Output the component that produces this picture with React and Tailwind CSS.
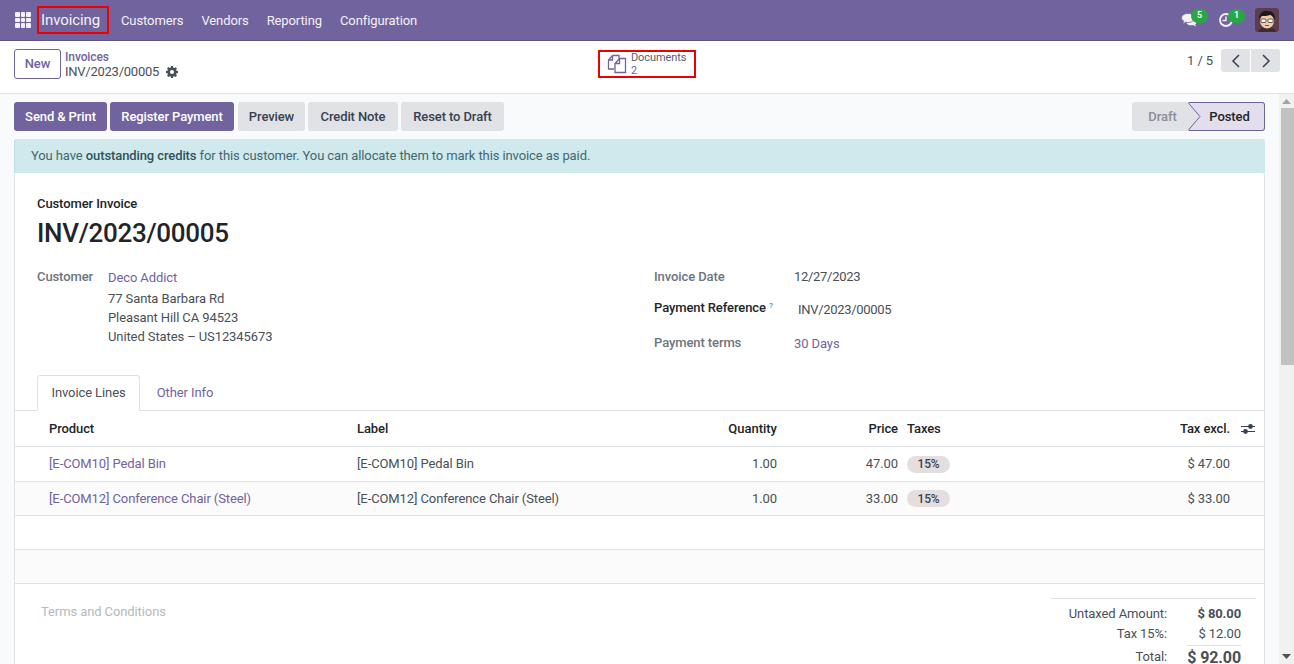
import React from 'react';

const PURPLE = 'text-[#71639e]';

const rows = [
    { product: '[E-COM10] Pedal Bin', qty: '1.00', price: '47.00', amount: '$ 47.00', bg: 'bg-white', h: 'h-[35px]' },
    { product: '[E-COM12] Conference Chair (Steel)', qty: '1.00', price: '33.00', amount: '$ 33.00', bg: 'bg-[#fbfbfb]', h: 'h-[34px]' },
];

const gridCols = 'grid grid-cols-[308px_300px_120px_121px_120px_212px_1fr] pl-[34px]';

const AppsIcon = () => (
    <div className="grid grid-cols-3 gap-[1px] w-[16px] h-[16px]">
        {[...Array(9)].map((_, i) => (
            <span key={i} className="bg-[#f3f1f7] rounded-[1px]" />
        ))}
    </div>
);

const Avatar = () => (
    <svg width="24" height="24" viewBox="0 0 24 24" className="rounded-[3px]">
        <rect width="24" height="24" fill="#5d3c4c" />
        <path d="M3 24c1-4 5-5 9-5s8 1 9 5z" fill="#3d2b2f" />
        <ellipse cx="12" cy="13" rx="7" ry="7.5" fill="#f3c9a8" />
        <path d="M4.5 12C3 5 9 2 13 3c5 0 8 4 6.500 9-1-3-2-4-4-5-3 1-7 1-9 1-1 1-1.500 2-2 4z" fill="#1d1a1c" />
        <rect x="6" y="11" width="5" height="3.500" rx="1" fill="#fff" stroke="#333" strokeWidth="0.800" />
        <rect x="13" y="11" width="5" height="3.500" rx="1" fill="#fff" stroke="#333" strokeWidth="0.800" />
        <path d="M10 17.500h4" stroke="#8a4b3a" strokeWidth="1" />
    </svg>
);

const Navbar = () => (
    <div className="h-[41px] bg-[#71639e] border-b border-[#5f5386] flex items-center pl-[15px] pr-[15px] text-[#f3f1f7] text-[13px]">
        <AppsIcon />
        <div className="ml-[6px] w-[72px] h-[28px] border-2 border-[#ee0000] flex items-center pl-[2px] text-[15px]">Invoicing</div>
        <div className="ml-[12px] pt-[1px] flex gap-[18px]">
            <span>Customers</span>
            <span>Vendors</span>
            <span>Reporting</span>
            <span>Configuration</span>
        </div>
        <div className="ml-auto flex items-center">
            <div className="relative w-[16px] h-[14px] mr-[22px]">
                <svg width="16" height="14" viewBox="0 0 16 14" fill="#f3f1f7">
                    <path d="M10.500 5.500c2.900 0 5.200 1.500 5.200 3.400 0 1-.6 1.800-1.500 2.400l.8 2.200-2.800-1.400c-.5.100-1.100.2-1.700.2-2.900 0-5.200-1.500-5.200-3.400s2.300-3.400 5.200-3.400z" />
                    <path d="M7 .5c3.700 0 6.500 2 6.500 4.500S10.700 9.500 7 9.500c-.8 0-1.500-.1-2.200-.3L1.800 11l.8-3C1.300 7.200.5 6.200.5 5 .5 2.500 3.300.5 7 .5z" stroke="#71639e" strokeWidth="0.800" />
                </svg>
                <span className="absolute -top-[4px] left-[10px] w-[17px] h-[14px] rounded-full bg-[#28a745] text-white text-[9px] font-semibold flex items-center justify-center">5</span>
            </div>
            <div className="relative w-[14px] h-[14px] mr-[22px]">
                <svg width="14" height="14" viewBox="0 0 14 14" fill="none" stroke="#f3f1f7" strokeWidth="1.800">
                    <circle cx="7" cy="7" r="6" />
                    <path d="M7 3.500V7.500H3.500" strokeWidth="1.400" />
                </svg>
                <span className="absolute -top-[4px] left-[9px] w-[17px] h-[14px] rounded-full bg-[#28a745] text-white text-[9px] font-semibold flex items-center justify-center">1</span>
            </div>
            <Avatar />
        </div>
    </div>
);

const ControlPanel = () => (
    <div className="h-[53px] bg-white border-b border-[#dee2e6] flex items-start pl-[14px] pr-[14px] relative">
        <button className="mt-[8px] w-[47px] h-[30px] rounded-[3px] border border-[#71639e] text-[#71639e] text-[13px] font-medium">New</button>
        <div className="ml-[4px] mt-[9px] w-[533px] leading-[14px]">
            <div className={`${PURPLE} text-[12px] font-medium`}>Invoices</div>
            <div className="flex items-center gap-[7px] text-[#495057] text-[13px] leading-[15px] tracking-[-0.25px]">
                INV/2023/00005
                <svg width="12" height="12" viewBox="0 0 16 16" fill="#495057">
                    <path fillRule="evenodd" d="M6.700 0h2.600l.4 2.100 1.300.6 1.800-1.200 1.800 1.800-1.200 1.800.6 1.300 2 .4v2.600l-2 .4-.6 1.300 1.200 1.800-1.800 1.800-1.800-1.200-1.300.6-.4 2H6.700l-.4-2-1.300-.6-1.800 1.200-1.800-1.800 1.200-1.800-.6-1.300-2-.4V6.600l2-.4.6-1.300-1.200-1.800 1.800-1.800 1.800 1.200 1.300-.6zM8 5.300a2.700 2.700 0 100 5.400 2.700 2.700 0 000-5.400z" />
                </svg>
            </div>
        </div>
        <div className="mt-[9px] w-[98px] h-[28px] border-2 border-[#ee0000] flex items-center pl-[7px] gap-[4px]">
            <svg width="20" height="20" viewBox="0 0 20 20" fill="none" stroke="#71639e" strokeWidth="1.300">
                <path d="M5.500 1.500H12V4.500M5.500 1.500V6H1.500M5.500 1.500L1.500 6V15H7" />
                <path d="M12.500 4.500H18.500V18.500H8V9.500ZM12.500 4.500V9.500H8" />
            </svg>
            <div className="text-[11px] leading-[13px] text-[#71639e]">
                <div className="text-[#5a5a6e]">Documents</div>
                <div>2</div>
            </div>
        </div>
        <div className="ml-auto flex items-center mt-[8px]">
            <span className="text-[13px] text-[#495057] mr-[8px]">1 / 5</span>
            <button className="w-[29px] h-[23px] bg-[#e0e2e6] rounded-l-[3px] flex items-center justify-center text-[#374151]">
                <svg width="10" height="14" viewBox="0 0 10 14" fill="none" stroke="currentColor" strokeWidth="1.500"><path d="M8 1L2 7l6 6" /></svg>
            </button>
            <button className="ml-[1px] w-[29px] h-[23px] bg-[#e0e2e6] rounded-r-[3px] flex items-center justify-center text-[#374151]">
                <svg width="10" height="14" viewBox="0 0 10 14" fill="none" stroke="currentColor" strokeWidth="1.500"><path d="M2 1l6 6-6 6" /></svg>
            </button>
        </div>
    </div>
);

const ButtonBar = () => (
    <div className="flex items-start justify-between pt-[8px]">
        <div className="flex gap-[3px]">
            <button className="h-[29px] w-[93px] bg-[#71639e] text-white rounded-[3px] text-[13px] font-medium">Send &amp; Print</button>
            <button className="h-[29px] w-[124px] bg-[#71639e] text-white rounded-[3px] text-[13px] font-medium">Register Payment</button>
            <button className="ml-[1px] h-[29px] w-[67px] bg-[#e0e2e6] text-[#374151] rounded-[3px] text-[13px] font-medium">Preview</button>
            <button className="h-[29px] w-[90px] bg-[#e0e2e6] text-[#374151] rounded-[3px] text-[13px] font-medium">Credit Note</button>
            <button className="h-[29px] w-[103px] bg-[#e0e2e6] text-[#374151] rounded-[3px] text-[13px] font-medium">Reset to Draft</button>
        </div>
        <div className="relative flex h-[29px] w-[133px] text-[13px] font-medium">
            <div className="w-[57px] bg-[#e0e2e6] rounded-l-[3px] text-[#8a8f96] flex items-center justify-center pl-[4px]">Draft</div>
            <div className="flex-1 bg-[#e2deeb] border border-l-0 border-[#71639e] rounded-r-[3px] text-[#212529] flex items-center justify-center pl-[6px]">Posted</div>
            <svg className="absolute left-[56px] top-0" width="14" height="29" viewBox="0 0 14 29">
                <path d="M0 0.500L12 14.500L0 28.500" fill="#e0e2e6" stroke="#71639e" strokeWidth="1" />
            </svg>
        </div>
    </div>
);

const InvoiceTable = () => (
    <div className="text-[13px]">
        <div className={`${gridCols} h-[37px] items-center border-y border-[#dee2e6] font-medium text-[#212529]`}>
            <div>Product</div>
            <div>Label</div>
            <div className="text-right tracking-normal">Quantity</div>
            <div className="text-right">Price</div>
            <div className="pl-[9px]">Taxes</div>
            <div className="text-right">Tax excl.</div>
            <div className="flex justify-center pl-[1px]">
                <svg width="14" height="12" viewBox="0 0 14 12" stroke="#374151" strokeWidth="1.200" fill="#374151">
                    <path d="M0 3.500h14M0 8.500h14" />
                    <circle cx="9.500" cy="3.500" r="1.800" />
                    <circle cx="4.500" cy="8.500" r="1.800" />
                </svg>
            </div>
        </div>
        {rows.map((r) => (
            <div key={r.product} className={`${gridCols} ${r.h} items-center border-b border-[#dee2e6] ${r.bg} text-[#495057]`}>
                <div className={PURPLE}>{r.product}</div>
                <div>{r.product}</div>
                <div className="text-right">{r.qty}</div>
                <div className="text-right">{r.price}</div>
                <div className="pl-[9px]">
                    <span className="inline-flex items-center justify-center w-[43px] h-[17px] rounded-full bg-[#e4dfde] text-[#374151] text-[12px] font-medium">15%</span>
                </div>
                <div className="text-right">{r.amount}</div>
                <div />
            </div>
        ))}
        <div className="h-[34px] border-b border-[#dee2e6] bg-white" />
        <div className="h-[34px] border-b border-[#dee2e6] bg-[#fbfbfb]" />
    </div>
);

const Totals = () => (
    <div className="w-[205px] mr-[8px] border-t border-[#dee2e6] text-[13px] text-[#495057] pt-[5px] pr-[15px]">
        <div className="grid grid-cols-[1fr_74px] h-[20px] items-center text-right">
            <span>Untaxed Amount:</span>
            <span className="font-bold">$ 80.00</span>
        </div>
        <div className="grid grid-cols-[1fr_74px] h-[20px] items-center text-right">
            <span>Tax 15%:</span>
            <span>$ 12.00</span>
        </div>
        <div className="grid grid-cols-[1fr_74px] h-[26px] items-center text-right">
            <span>Total:</span>
            <span className="ml-[20px] text-[16px] font-bold border-t border-[#dee2e6] whitespace-nowrap leading-[24px]">$ 92.00</span>
        </div>
    </div>
);

const App = () => (
    <div className="h-[664px] w-[1294px] overflow-hidden flex flex-col bg-[#f9fafb] font-['Roboto',sans-serif] tracking-[-0.1px]">
        <Navbar />
        <ControlPanel />
        <div className="flex-1 flex min-h-0">
            <div className="flex-1 min-w-0 px-[14px] overflow-hidden">
                <ButtonBar />
                <div className="mt-[8px] h-[34px] rounded-t-[3px] bg-[#cfe9ed] border-l border-[#bcdde2] flex items-center pl-[16px] text-[13px] text-[#3f6870]">
                    <span>You have <b className="font-medium text-[#2f535a]">outstanding credits</b> for this customer. You can allocate them to mark this invoice as paid.</span>
                </div>
                <div className="bg-white border-x border-[#dee2e6] rounded-t-[3px] h-[600px]">
                    <div className="pl-[22px] pt-[23px]">
                        <div className="text-[13px] font-medium text-[#212529] leading-[16px]">Customer Invoice</div>
                        <div className="mt-[5px] text-[26px] font-medium text-[#212529] leading-[32px] tracking-[-0.3px]">INV/2023/00005</div>
                    </div>
                    <div className="flex mt-[18px] pl-[22px] h-[108px]">
                        <div className="w-[617px] flex items-start">
                            <div className="w-[71px] text-[13px] text-[#6c757d] font-medium">Customer</div>
                            <div className="pt-[1px] text-[13px] text-[#495057] leading-[19px]">
                                <div className="text-[#71639e] mb-[2px]">Deco Addict</div>
                                <div>77 Santa Barbara Rd</div>
                                <div>Pleasant Hill CA 94523</div>
                                <div>United States – US12345673</div>
                            </div>
                        </div>
                        <div className="text-[13px] leading-[19px]">
                            <div className="flex h-[31px]">
                                <div className="w-[140px] text-[#6c757d] font-medium">Invoice Date</div>
                                <div className="text-[#495057] tracking-[-0.3px]">12/27/2023</div>
                            </div>
                            <div className="flex h-[35px]">
                                <div className="w-[144px] text-[#212529] font-medium">Payment Reference <sup className="text-[#2a9bc0] text-[8px]">?</sup></div>
                                <div className="text-[#495057] pt-[2px] tracking-[-0.3px]">INV/2023/00005</div>
                            </div>
                            <div className="flex">
                                <div className="w-[140px] text-[#6c757d] font-medium">Payment terms</div>
                                <div className="text-[#71639e] pt-[1px]">30 Days</div>
                            </div>
                        </div>
                    </div>
                    <div className="flex items-end h-[36px] pl-[22px] text-[13px] -mb-[1px] relative z-10">
                        <div className="h-[36px] w-[103px] bg-white border border-b-white border-[#dee2e6] rounded-t-[3px] flex items-center justify-center text-[#495057]">Invoice Lines</div>
                        <div className="h-[36px] w-[90px] flex items-center justify-center text-[#71639e]">Other Info</div>
                    </div>
                    <InvoiceTable />
                    <div className="flex justify-between items-start pt-[14px] pl-[26px]">
                        <div className="pt-[4px] text-[13px] text-[#b5b9be]">Terms and Conditions</div>
                        <Totals />
                    </div>
                </div>
            </div>
            <div className="w-[15px] bg-[#f1f1f1] flex flex-col items-end">
                <svg className="mt-[5px] mr-[3px]" width="9" height="5" viewBox="0 0 9 5"><path d="M4.500 0L9 5H0z" fill="#a3a3a3" /></svg>
                <div className="mt-[4px] w-[13px] h-[257px] bg-[#c1c1c1]" />
                <div className="flex-1" />
                <svg className="mb-[5px] mr-[3px]" width="9" height="5" viewBox="0 0 9 5"><path d="M0 0h9L4.500 5z" fill="#505050" /></svg>
            </div>
        </div>
    </div>
);

export default App;
